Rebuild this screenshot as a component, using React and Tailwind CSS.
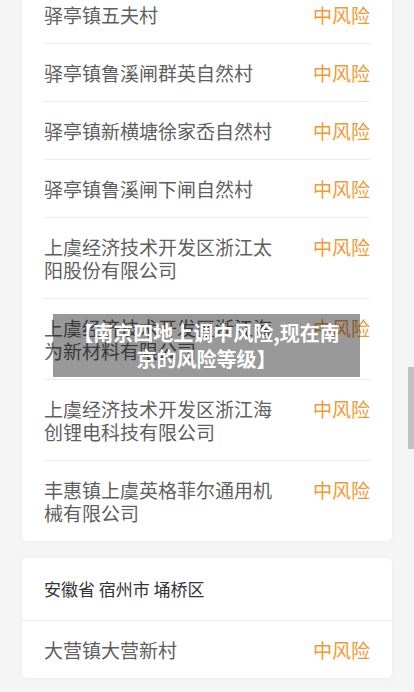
const firstCard = [
  '驿亭镇五夫村',
  '驿亭镇鲁溪闸群英自然村',
  '驿亭镇新横塘徐家岙自然村',
  '驿亭镇鲁溪闸下闸自然村',
  '上虞经济技术开发区浙江太阳股份有限公司',
  '上虞经济技术开发区浙江海为新材料有限公司',
  '上虞经济技术开发区浙江海创锂电科技有限公司',
  '丰惠镇上虞英格菲尔通用机械有限公司',
]

function Row({ name, last }) {
  return (
    <div className="px-[22px]">
      <div
        className={
          'flex items-start justify-between gap-[30px] py-[17px] ' +
          (last ? '' : 'border-b border-[#ececec]')
        }
      >
        <span className="flex-1 text-[19px] leading-[23px] text-[#5f5f5f]">{name}</span>
        <span className="shrink-0 text-[19px] leading-[23px] text-[#f09a35]">中风险</span>
      </div>
    </div>
  )
}

export default function App() {
  return (
    <div
      className="relative h-[692px] w-[414px] overflow-hidden bg-[#f5f5f5]"
      style={{ fontFamily: '"Noto Sans CJK SC", "Noto Sans", sans-serif' }}
    >
      <div className="-mt-[14px] flex flex-col gap-[17px] px-[22px]">
        <div className="rounded-b-[5px] bg-white shadow-[0_0_6px_rgba(0,0,0,0.04)]">
          {firstCard.map((name, i) => (
            <Row key={name} name={name} last={i === firstCard.length - 1} />
          ))}
        </div>

        <div className="rounded-[5px] bg-white shadow-[0_0_6px_rgba(0,0,0,0.04)]">
          <div className="flex h-[63px] items-center border-b border-[#ececec] px-[22px] text-[17px] text-[#333]">
            安徽省 宿州市 埇桥区
          </div>
          <div className="px-[22px]">
            <div className="flex h-[57px] items-center justify-between">
              <span className="text-[19px] leading-[24px] text-[#5f5f5f]">大营镇大营新村</span>
              <span className="text-[19px] leading-[24px] text-[#f09a35]">中风险</span>
            </div>
          </div>
        </div>
      </div>

      {/* headline banner lying over the list */}
      <div className="absolute left-[53px] top-[314px] flex h-[63px] w-[307px] items-center justify-center bg-black/40 px-[18px]">
        <p className="text-center text-[20px] font-bold leading-[26px] text-white">
          【南京四地上调中风险,现在南京的风险等级】
        </p>
      </div>

      {/* scrollbar thumb */}
      <div className="absolute right-0 top-[367px] h-[82px] w-[6px] bg-[#c1c1c1]" />
    </div>
  )
}
